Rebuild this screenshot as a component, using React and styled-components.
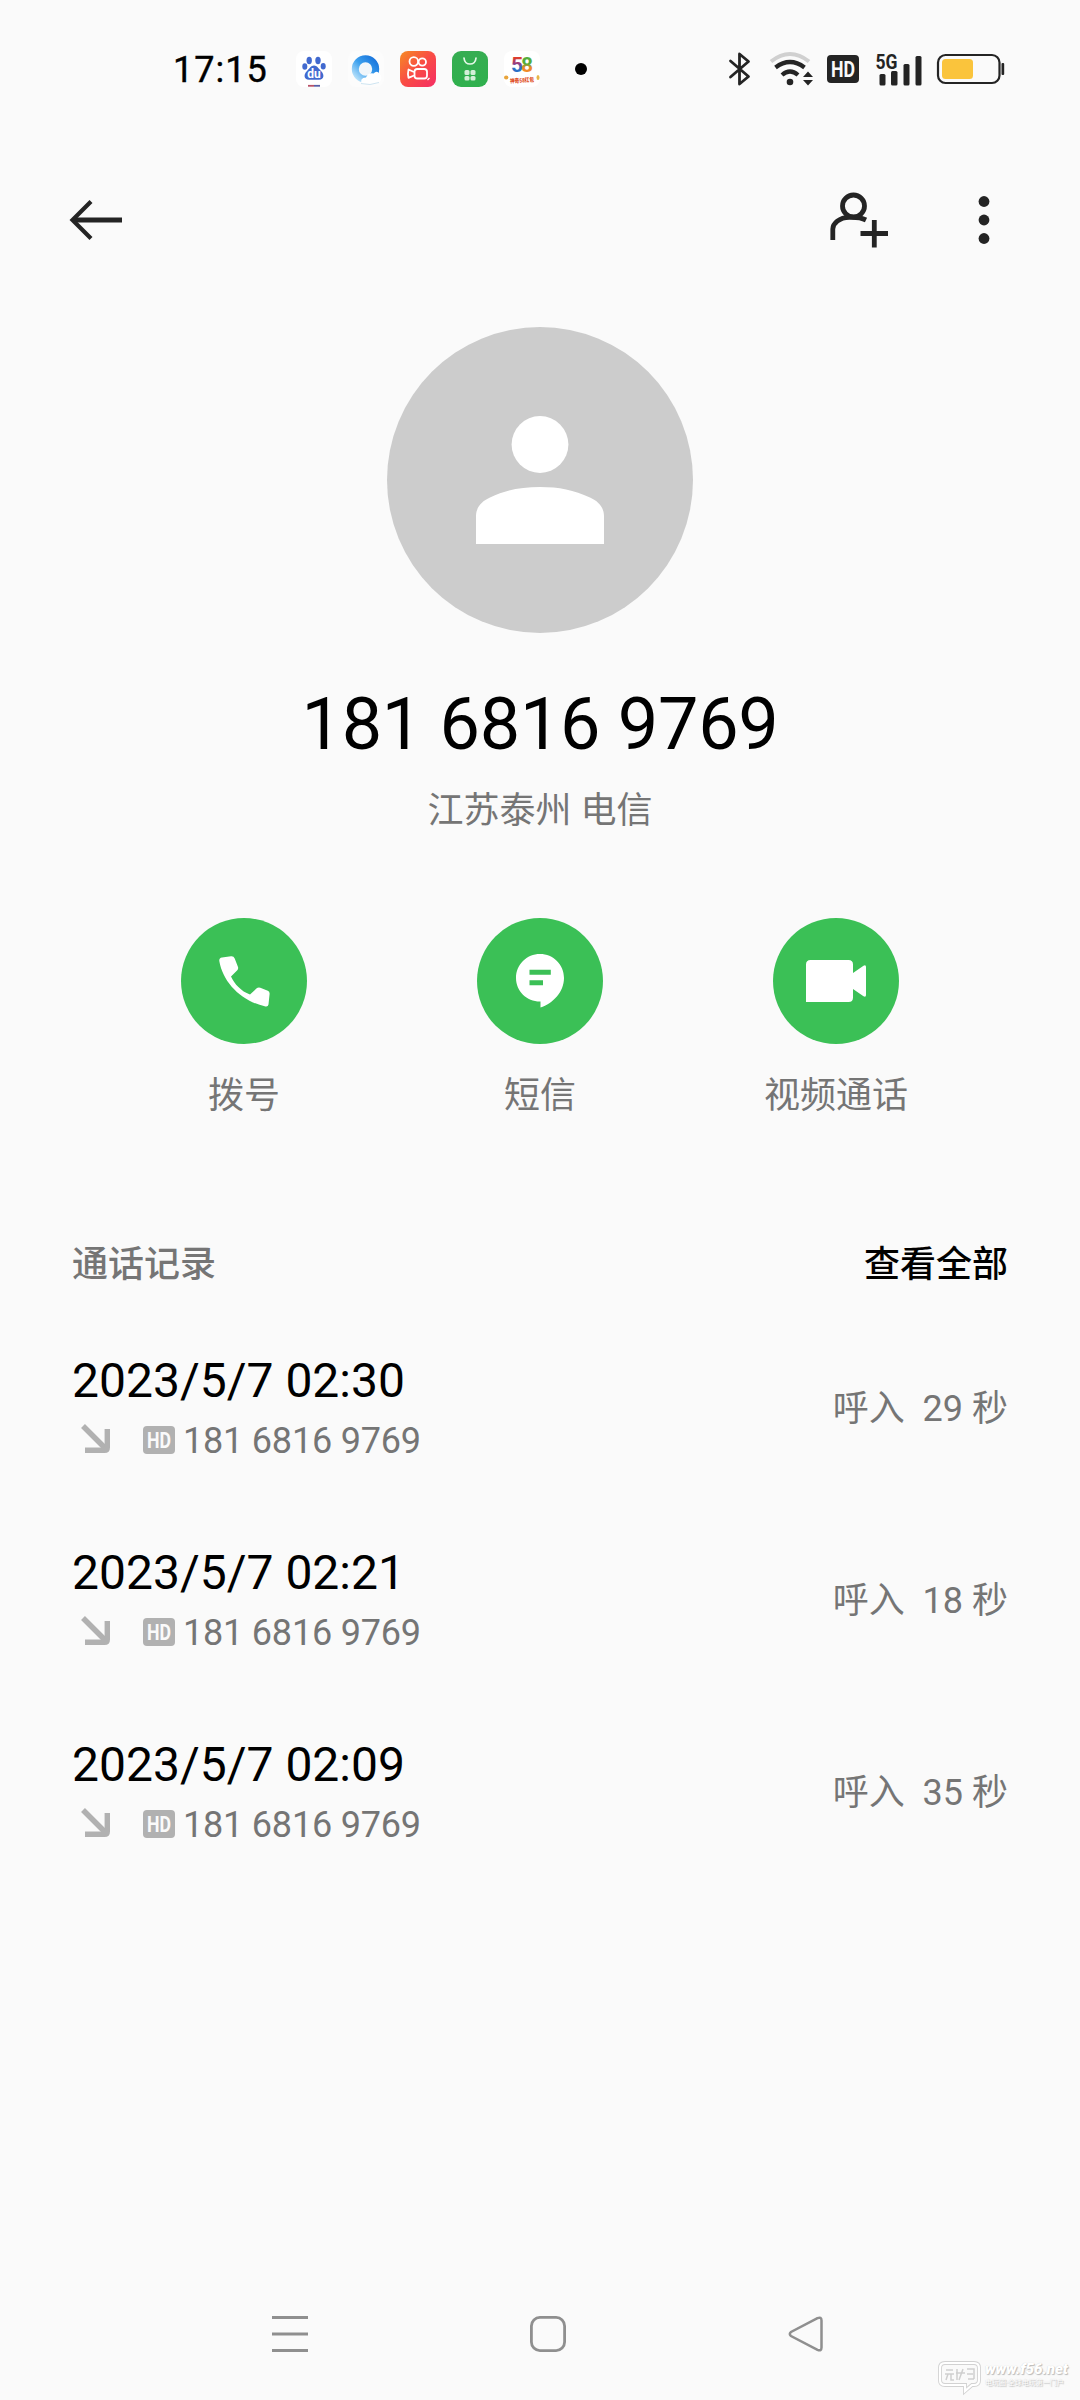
import styled, { createGlobalStyle } from "styled-components";

const calls = [
  { date: "2023/5/7 02:30", number: "181 6816 9769", duration: "呼入  29 秒" },
  { date: "2023/5/7 02:21", number: "181 6816 9769", duration: "呼入  18 秒" },
  { date: "2023/5/7 02:09", number: "181 6816 9769", duration: "呼入  35 秒" },
];

export default function App() {
  return (
    <Page>
      <GlobalStyle />
      <StatusBar />
      <Toolbar>
        <BackIcon />
        <ToolbarActions>
          <AddContactIcon />
          <MoreIcon />
        </ToolbarActions>
      </Toolbar>
      <Profile>
        <Avatar>
          <svg width="128" height="128" viewBox="0 0 128 128" fill="#fff">
            <circle cx="64" cy="28.500" r="28.400" />
            <path d="M0 128V100C0 92 5 85.500 14 81.500C30 74 45 71 64 71S98 74 114 81.500C123 85.500 128 92 128 100V128Z" />
          </svg>
        </Avatar>
        <PhoneNumber>181 6816 9769</PhoneNumber>
        <Location>江苏泰州 电信</Location>
      </Profile>
      <Actions>
        <Action icon={<CallIcon />} label="拨号" />
        <Action icon={<MessageIcon />} label="短信" />
        <Action icon={<VideoIcon />} label="视频通话" />
      </Actions>
      <SectionHeader>
        <SectionTitle>通话记录</SectionTitle>
        <ViewAll>查看全部</ViewAll>
      </SectionHeader>
      <CallList>
        {calls.map((call) => (
          <CallRow key={call.date}>
            <div>
              <CallDate>{call.date}</CallDate>
              <CallInfo>
                <IncomingIcon />
                <CallHd>
                  <HdIcon color="#b1b1b1" />
                </CallHd>
                {call.number}
              </CallInfo>
            </div>
            <Duration>{call.duration}</Duration>
          </CallRow>
        ))}
      </CallList>
      <NavBar>
        <svg width="36" height="36" viewBox="0 0 36 36" stroke="#8f8f8f" strokeWidth="3">
          <path d="M0 1.500H36M0 18H36M0 34.500H36" />
        </svg>
        <svg width="36" height="36" viewBox="0 0 36 36" fill="none" stroke="#8f8f8f" strokeWidth="2.800">
          <rect x="1.400" y="1.400" width="33.200" height="33.200" rx="8.500" />
        </svg>
        <svg width="36" height="36" viewBox="0 0 36 36" fill="none" stroke="#8f8f8f" strokeWidth="2.500">
          <path d="M29.500 2.200L3 16Q.600 18 3 20L29.500 33.800Q33.500 35.500 33.500 31.500V4.500Q33.500.500 29.500 2.200Z" />
        </svg>
      </NavBar>
      <Watermark>
        <svg width="46" height="34" viewBox="0 0 46 34" fill="none">
          <path d="M7 3H36Q41 3 41 8V20Q41 25 36 25H34L27 31V25H7Q2 25 2 20V8Q2 3 7 3Z" stroke="#d2d2d2" strokeWidth="4" />
          <path d="M7 3H36Q41 3 41 8V20Q41 25 36 25H34L27 31V25H7Q2 25 2 20V8Q2 3 7 3Z" stroke="#fff" strokeWidth="2.200" />
          <path d="M8 10H15M7 14H16M10 14L8 20M13 14V20H16M19 9V20M18 13H27M25 9L21 20M29 9H36V19M29 14H35M30 19H36" stroke="#cfcfcf" strokeWidth="1.500" />
        </svg>
        <WatermarkText>
          <b>www.f56.net</b>
          <small>电玩圈·全球电玩第一门户</small>
        </WatermarkText>
      </Watermark>
    </Page>
  );
}

function StatusBar() {
  return (
    <Status>
      <Clock>17:15</Clock>
      <AppIcons>
        <BaiduIcon />
        <BrowserIcon />
        <KuaishouIcon />
        <StoreIcon />
        <FiftyEightIcon />
      </AppIcons>
      <Dot />
      <Indicators>
        <svg width="22" height="34" viewBox="0 0 22 34" fill="none" stroke="#242424" strokeWidth="2.800" strokeLinejoin="round">
          <path d="M1.500 9L19.500 24.500L10.500 32V2L19.500 9.500L1.500 25" strokeLinecap="round" />
        </svg>
        <Wifi width="46" height="34" viewBox="0 0 46 34" fill="none">
          <path d="M2 9.500Q21 -5.500 40 9.500" stroke="#d0d0d0" strokeWidth="4" />
          <path d="M6.500 15.500Q21 4.500 35.500 15.500" stroke="#242424" strokeWidth="4.300" />
          <path d="M13 23Q21 16 29 23" stroke="#242424" strokeWidth="4.300" />
          <circle cx="21" cy="30" r="3.300" fill="#242424" />
          <path d="M34 25L39 19.500L44 25ZM34 28L39 33.500L44 28Z" fill="#242424" />
        </Wifi>
        <HdIcon color="#242424" />
        <Signal width="46" height="34" viewBox="0 0 46 34" fill="#242424">
          <text x="-0.500" y="16.500" fontSize="20" fontWeight="700" textLength="22" lengthAdjust="spacingAndGlyphs">
            5G
          </text>
          <rect x="3.500" y="22" width="6" height="11.500" rx="1.500" />
          <rect x="15" y="19" width="6.500" height="14.500" rx="1.500" />
          <rect x="27.500" y="12" width="6" height="21.500" rx="1.500" />
          <rect x="39.500" y="4" width="6" height="29.500" rx="1.500" />
        </Signal>
        <svg width="68" height="30" viewBox="0 0 68 30">
          <rect x="1" y="1" width="61.500" height="28" rx="7.500" fill="none" stroke="#242424" strokeWidth="2.200" />
          <rect x="5" y="5" width="31" height="20" rx="3.500" fill="#fac43c" />
          <rect x="64.500" y="9" width="2.700" height="12" rx="1" fill="#242424" />
        </svg>
      </Indicators>
    </Status>
  );
}

function Action({ icon, label }) {
  return (
    <ActionItem>
      <ActionButton>{icon}</ActionButton>
      <ActionLabel>{label}</ActionLabel>
    </ActionItem>
  );
}

function HdIcon({ color }) {
  return (
    <svg width="32" height="28" viewBox="0 0 32 28">
      <rect width="32" height="28" rx="4" fill={color} />
      <text x="4" y="21.500" fontSize="21.500" fontWeight="700" fill="#fafafa" textLength="24" lengthAdjust="spacingAndGlyphs">
        HD
      </text>
    </svg>
  );
}

function BackIcon() {
  return (
    <svg width="54" height="42" viewBox="0 0 54 42" fill="none" stroke="#242424">
      <path d="M4 21H52" strokeWidth="5" />
      <path d="M21 2.500L2.500 21L21 39.500" strokeWidth="4.200" />
    </svg>
  );
}

function AddContactIcon() {
  return (
    <svg width="58" height="56" viewBox="0 0 58 56" fill="none" stroke="#242424" strokeWidth="4.800">
      <circle cx="23.500" cy="14" r="11" />
      <path d="M2.800 48V37C2.800 32 9 25 20 25.300Q30 25 36 28" />
      <path d="M30.500 41.500H58M44.300 28V55.500" />
    </svg>
  );
}

function MoreIcon() {
  return (
    <svg width="12" height="50" viewBox="0 0 12 50" fill="#242424">
      <circle cx="6" cy="6.500" r="5.400" />
      <circle cx="6" cy="25" r="5.400" />
      <circle cx="6" cy="43.500" r="5.400" />
    </svg>
  );
}

function CallIcon() {
  return (
    <svg width="51" height="51" viewBox="0 0 51 51" fill="#fff">
      <path d="M3 1.500L12 .300Q14.700 0 15.700 2.500L19 11Q19.500 12.500 18.500 14L12 20.500C15.500 28 22 35.300 31 38.500L38 32Q39.500 31 41.300 31.700L48.800 34.800Q50.800 35.700 50.600 38L49.500 48.500Q49 51 46.500 50.500C23 45.500 4 27 .300 5Q0 2 3 1.500Z" />
    </svg>
  );
}

function MessageIcon() {
  return (
    <svg width="48" height="54" viewBox="0 0 48 54">
      <path d="M24 0C37.300 0 48 10.500 48 24C48 38 37 49.500 24.500 53.500V47.500H24C10.700 47.500 0 37 0 24C0 10.500 10.700 0 24 0Z" fill="#fff" />
      <path d="M13.500 18.200H34.800M13.500 28.700H27" stroke="#3bc056" strokeWidth="5" />
    </svg>
  );
}

function VideoIcon() {
  return (
    <svg width="60" height="42" viewBox="0 0 60 42" fill="#fff">
      <path d="M4.500 0H42.500Q47 0 47 4.500V13L57.500 5.800Q60 4.500 60 7V35Q60 37.500 57.500 36.200L47 29V37.500Q47 42 42.500 42H0V4.500Q0 0 4.500 0Z" />
    </svg>
  );
}

function IncomingIcon() {
  return (
    <Incoming width="30" height="30" viewBox="0 0 30 30" fill="none" stroke="#b1b1b1" strokeWidth="5.400">
      <path d="M2 2L25 25" />
      <path d="M4 26.300H23.500Q26.300 26.300 26.300 23.500V5" />
    </Incoming>
  );
}

function BaiduIcon() {
  return (
    <svg width="36" height="36" viewBox="0 0 36 36">
      <rect width="36" height="36" rx="8" fill="#fff" />
      <g fill="#4169cf">
        <ellipse cx="13.200" cy="9.500" rx="2.700" ry="3.700" />
        <ellipse cx="22" cy="9.500" rx="2.700" ry="3.700" />
        <ellipse cx="8.800" cy="15.500" rx="2.500" ry="3.300" />
        <ellipse cx="27.200" cy="15.200" rx="2.500" ry="3.300" />
        <path d="M18 14.500C21 14.500 22.500 17.500 25 20C28.500 23 28.500 28.800 23 28.800H13C7.500 28.800 7.500 23 11 20C13.500 17.500 15 14.500 18 14.500Z" />
      </g>
      <text x="18" y="27" textAnchor="middle" fontSize="12" fontWeight="700" fill="#fff">
        du
      </text>
      <path d="M12 34.800H18" stroke="#b85168" strokeWidth="1.800" />
      <path d="M18 34.800H24" stroke="#565fa8" strokeWidth="1.800" />
    </svg>
  );
}

function BrowserIcon() {
  return (
    <svg width="36" height="36" viewBox="0 0 36 36">
      <defs>
        <linearGradient id="ring" x1="1" y1="0" x2="0" y2="1">
          <stop offset="0" stopColor="#1873dc" />
          <stop offset="0.5" stopColor="#3ba0ee" />
          <stop offset="1" stopColor="#bfe5fb" />
        </linearGradient>
      </defs>
      <rect width="36" height="36" rx="8" fill="#fcfcfc" />
      <circle cx="17.500" cy="18" r="10.200" fill="#f1f6fa" stroke="url(#ring)" strokeWidth="7" />
      <path d="M14 33Q11 27 18 26.500Q20 21 25.500 22.500Q29 19 31.500 23Q35 26 32.500 30Q31 33 27 33Z" fill="#fff" />
      <path d="M13 32.500Q22 35 31 31.500" stroke="#cfe5f1" strokeWidth="1" fill="none" />
    </svg>
  );
}

function KuaishouIcon() {
  return (
    <svg width="36" height="36" viewBox="0 0 36 36">
      <defs>
        <linearGradient id="orange" x1="0" y1="0" x2="1" y2="1">
          <stop offset="0" stopColor="#f68b24" />
          <stop offset="0.5" stopColor="#f94b45" />
          <stop offset="1" stopColor="#f52d65" />
        </linearGradient>
      </defs>
      <rect width="36" height="36" rx="8" fill="url(#orange)" />
      <g fill="none" stroke="#fff" strokeWidth="1.800" strokeLinejoin="round">
        <circle cx="13.800" cy="10.500" r="4.300" />
        <circle cx="22.300" cy="11" r="3.700" />
        <rect x="14.500" y="18" width="12.500" height="9.500" rx="2.800" />
        <path d="M14 21L8.500 18.500Q7.500 22.500 8.500 26.800L14 24.500" />
      </g>
      <path d="M27.500 29L29.500 27" stroke="#fff" strokeWidth="1.200" />
    </svg>
  );
}

function StoreIcon() {
  return (
    <svg width="36" height="36" viewBox="0 0 36 36">
      <defs>
        <linearGradient id="green" x1="0" y1="0" x2="0" y2="1">
          <stop offset="0" stopColor="#36ad52" />
          <stop offset="1" stopColor="#2fb04d" />
        </linearGradient>
      </defs>
      <rect width="36" height="36" rx="9" fill="url(#green)" />
      <path d="M12 7C12.500 15 23.500 15 24 7" fill="none" stroke="#e5f8e8" strokeWidth="1.700" strokeLinecap="round" />
      <g fill="#d3efd8">
        <rect x="12.500" y="19" width="5" height="5" rx="1.500" />
        <rect x="18.500" y="19" width="5" height="5" rx="1.500" />
        <rect x="12.500" y="25" width="5" height="4.500" rx="1.500" />
        <rect x="18.500" y="25" width="5" height="4.500" rx="1.500" />
      </g>
    </svg>
  );
}

function FiftyEightIcon() {
  return (
    <svg width="36" height="36" viewBox="0 0 36 36">
      <defs>
        <linearGradient id="five" x1="0" y1="0" x2="0" y2="1">
          <stop offset="0.2" stopColor="#df3d2c" />
          <stop offset="0.45" stopColor="#923d86" />
          <stop offset="0.6" stopColor="#2b70c7" />
        </linearGradient>
        <linearGradient id="eight" x1="0" y1="0" x2="0" y2="1">
          <stop offset="0.45" stopColor="#55ad3d" />
          <stop offset="0.6" stopColor="#ef8a29" />
        </linearGradient>
      </defs>
      <rect width="36" height="36" rx="8" fill="#fff" />
      <g fontSize="21" fontWeight="700">
        <text x="7" y="21" fill="url(#five)">5</text>
        <text x="17" y="21" fill="url(#eight)">8</text>
      </g>
      <ellipse cx="2.200" cy="26.500" rx="2.200" ry="2" fill="#e8a43b" />
      <ellipse cx="34" cy="26.500" rx="1.500" ry="2.500" fill="#e8b647" />
      <text x="6" y="31.500" fontSize="6" fontWeight="900" fill="#df5128" textLength="24" lengthAdjust="spacingAndGlyphs" transform="rotate(-4 18 29)">
        神奇58红包
      </text>
    </svg>
  );
}

const GlobalStyle = createGlobalStyle`
  body {
    margin: 0;
    background: #fafafa;
    font-family: Roboto, "Noto Sans CJK SC", sans-serif;
  }
  svg {
    display: block;
    flex-shrink: 0;
    overflow: visible;
  }
`;

const Page = styled.div`
  position: relative;
  display: flex;
  flex-direction: column;
  width: 1080px;
  height: 2400px;
  overflow: hidden;
  background: #fafafa;
  color: #000;
`;

const Status = styled.header`
  display: flex;
  align-items: center;
  height: 138px;
  padding: 0 75px 0 173px;
  box-sizing: border-box;
`;

const Clock = styled.span`
  width: 123px;
  padding-top: 2px;
  font-size: 36px;
  line-height: 42px;
  letter-spacing: 1px;
  -webkit-text-stroke: 0.4px #000;
`;

const AppIcons = styled.div`
  display: flex;
  gap: 16px;
`;

const Dot = styled.span`
  width: 12px;
  height: 12px;
  margin-left: 35px;
  border-radius: 50%;
  background: #000;
`;

const Indicators = styled.div`
  display: flex;
  align-items: center;
  margin-left: auto;
`;

const Wifi = styled.svg`
  margin: 0 12px 0 18px;
`;

const Signal = styled.svg`
  margin: 0 15px 0 17px;
`;

const Toolbar = styled.div`
  display: flex;
  align-items: center;
  justify-content: space-between;
  height: 164px;
  padding: 0 90px 0 70px;
`;

const ToolbarActions = styled.div`
  display: flex;
  align-items: center;
  gap: 90px;
`;

const Profile = styled.section`
  display: flex;
  flex-direction: column;
  align-items: center;
  padding-top: 25px;
`;

const Avatar = styled.div`
  display: flex;
  align-items: center;
  justify-content: center;
  width: 306px;
  height: 306px;
  border-radius: 50%;
  background: #ccc;
`;

const PhoneNumber = styled.h1`
  margin: 50px 0 0;
  font-size: 72px;
  line-height: 84px;
  font-weight: 400;
  letter-spacing: -0.3px;
`;

const Location = styled.p`
  margin: 23px 0 0;
  font-size: 36px;
  line-height: 42px;
  color: #757575;
`;

const Actions = styled.section`
  display: grid;
  grid-template-columns: repeat(3, 296px);
  justify-content: center;
  margin-top: 86px;
`;

const ActionItem = styled.div`
  display: flex;
  flex-direction: column;
  align-items: center;
  gap: 31px;
`;

const ActionButton = styled.div`
  display: flex;
  align-items: center;
  justify-content: center;
  width: 126px;
  height: 126px;
  border-radius: 50%;
  background: #3bc056;
`;

const ActionLabel = styled.span`
  font-size: 36px;
  line-height: 42px;
  color: #757575;
`;

const SectionHeader = styled.div`
  display: flex;
  justify-content: space-between;
  margin-top: 127px;
  padding: 0 72px;
  font-size: 36px;
  line-height: 42px;
  font-weight: 500;
`;

const SectionTitle = styled.span`
  color: #757575;
`;

const ViewAll = styled.span`
  color: #000;
`;

const CallList = styled.div`
  display: flex;
  flex-direction: column;
  gap: 83px;
  margin-top: 67px;
  padding: 0 72px;
`;

const CallRow = styled.div`
  display: flex;
  align-items: center;
  justify-content: space-between;
  height: 109px;
`;

const CallDate = styled.div`
  font-size: 48px;
  line-height: 56px;
`;

const CallInfo = styled.div`
  display: flex;
  align-items: center;
  height: 42px;
  margin-top: 11px;
  padding-left: 9px;
  font-size: 36px;
  line-height: 42px;
  letter-spacing: -0.2px;
  color: #757575;
`;

const Incoming = styled.svg`
  margin-bottom: 4px;
`;

const CallHd = styled.span`
  margin: 0 8px 2px 32px;
  letter-spacing: 0;
`;

const Duration = styled.span`
  padding-top: 2px;
  font-size: 36px;
  line-height: 42px;
  color: #757575;
  white-space: pre;
`;

const NavBar = styled.nav`
  display: flex;
  align-items: center;
  gap: 222px;
  height: 132px;
  margin-top: auto;
  padding-left: 272px;
`;

const Watermark = styled.div`
  position: absolute;
  right: 8px;
  bottom: 6px;
  display: flex;
  gap: 1px;
  color: #fff;
  text-shadow: 1px 1px 1px #bbb, 0 0 1px #ccc;
`;

const WatermarkText = styled.div`
  display: flex;
  flex-direction: column;
  width: 87px;
  b {
    font: italic 900 15px/18px Roboto, sans-serif;
    white-space: nowrap;
  }
  small {
    font-size: 7px;
    line-height: 10px;
    white-space: nowrap;
  }
`;
